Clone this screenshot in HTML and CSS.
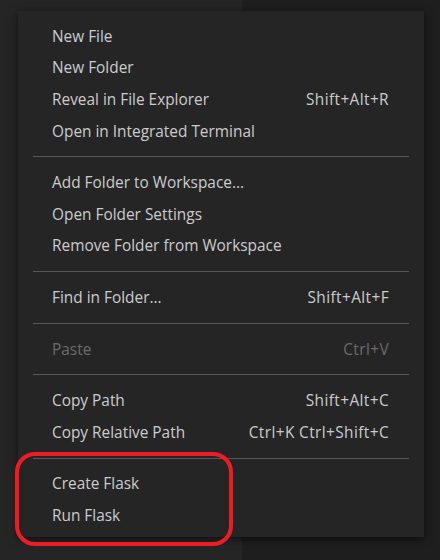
FILE: index.html
```html
<!DOCTYPE html>
<html>
<head>
<meta charset="utf-8">
<link rel="stylesheet" href="styles.css">
</head>
<body>
<div class="workbench">
  <div class="sidebar"></div>
  <div class="editor"></div>
</div>
<div class="menu">
  <div class="item"><span>New File</span></div>
  <div class="item"><span>New Folder</span></div>
  <div class="item"><span>Reveal in File Explorer</span><span class="key">Shift+Alt+R</span></div>
  <div class="item"><span>Open in Integrated Terminal</span></div>
  <div class="sep"></div>
  <div class="item"><span>Add Folder to Workspace...</span></div>
  <div class="item"><span>Open Folder Settings</span></div>
  <div class="item"><span>Remove Folder from Workspace</span></div>
  <div class="sep"></div>
  <div class="item"><span>Find in Folder...</span><span class="key">Shift+Alt+F</span></div>
  <div class="sep"></div>
  <div class="item disabled"><span>Paste</span><span class="key">Ctrl+V</span></div>
  <div class="sep"></div>
  <div class="item"><span>Copy Path</span><span class="key">Shift+Alt+C</span></div>
  <div class="item"><span>Copy Relative Path</span><span class="key">Ctrl+K Ctrl+Shift+C</span></div>
  <div class="sep"></div>
  <div class="item"><span>Create Flask</span></div>
  <div class="item"><span>Run Flask</span></div>
</div>
<div class="highlight"></div>
</body>
</html>
```
FILE: styles.css
```css
html, body {
  margin: 0;
  padding: 0;
  width: 440px;
  height: 560px;
  overflow: hidden;
  background: #1e1e1e;
}
.workbench {
  display: flex;
  height: 560px;
}
.sidebar {
  width: 242px;
  background: #252526;
}
.editor {
  flex: 1;
  background: #1e1e1e;
}
.menu {
  position: absolute;
  left: 18px;
  top: 11px;
  width: 406px;
  box-sizing: border-box;
  padding: 9.5px 0 5.5px;
  background: #252526;
  box-shadow: 0 2px 8px rgba(0, 0, 0, 0.6);
  font-family: "Open Sans", "Noto Sans", sans-serif;
  font-size: 15.4px;
  color: #cccccc;
}
.item {
  height: 31.6px;
  display: flex;
  align-items: center;
  justify-content: space-between;
  padding: 0 35px 0 34px;
}
.key {
  letter-spacing: 0.4px;
}
.item.disabled {
  color: #6b6b6b;
}
.sep {
  height: 1px;
  margin: 9.5px 15px;
  background: #575757;
}
.highlight {
  position: absolute;
  left: 15px;
  top: 452px;
  width: 218px;
  height: 94px;
  box-sizing: border-box;
  border: 4px solid #ee1c25;
  border-radius: 20px;
}
```
